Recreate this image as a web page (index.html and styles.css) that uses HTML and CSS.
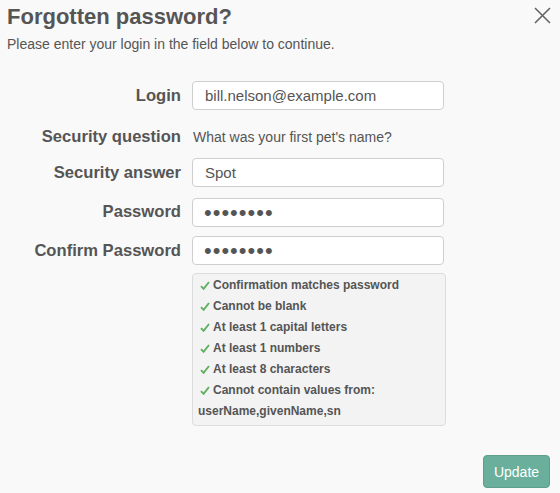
FILE: index.html
```html
<!DOCTYPE html>
<html lang="en">
<head>
<meta charset="utf-8">
<title>Forgotten password?</title>
<link rel="stylesheet" href="styles.css">
</head>
<body>
<div class="dialog">
  <div class="header">
    <div class="heading">
      <h1 class="title">Forgotten password?</h1>
      <p class="subtitle">Please enter your login in the field below to continue.</p>
    </div>
    <button class="close" type="button" aria-label="Close">
      <svg width="17" height="17" viewBox="0 0 17 17"><path d="M1 1 L16 16 M16 1 L1 16" stroke="#666" stroke-width="1.6" fill="none"/></svg>
    </button>
  </div>

  <form class="form">
    <label class="label" for="login">Login</label>
    <input class="field" id="login" type="text" value="bill.nelson@example.com">

    <span class="label q">Security question</span>
    <span class="question q">What was your first pet's name?</span>

    <label class="label" for="answer">Security answer</label>
    <input class="field" id="answer" type="text" value="Spot">

    <label class="label" for="pw">Password</label>
    <input class="field pw" id="pw" type="password" value="abcdefgh">

    <label class="label" for="pw2">Confirm Password</label>
    <input class="field pw" id="pw2" type="password" value="abcdefgh">

    <span></span>
    <div class="rules">
      <div class="rule"><svg class="tick" viewBox="0 0 10 9"><path d="M1 5.2 L3.6 7.8 L9 1" stroke="#5fae5f" stroke-width="1.9" fill="none"/></svg>Confirmation matches password</div>
      <div class="rule"><svg class="tick" viewBox="0 0 10 9"><path d="M1 5.2 L3.6 7.8 L9 1" stroke="#5fae5f" stroke-width="1.9" fill="none"/></svg>Cannot be blank</div>
      <div class="rule"><svg class="tick" viewBox="0 0 10 9"><path d="M1 5.2 L3.6 7.8 L9 1" stroke="#5fae5f" stroke-width="1.9" fill="none"/></svg>At least 1 capital letters</div>
      <div class="rule"><svg class="tick" viewBox="0 0 10 9"><path d="M1 5.2 L3.6 7.8 L9 1" stroke="#5fae5f" stroke-width="1.9" fill="none"/></svg>At least 1 numbers</div>
      <div class="rule"><svg class="tick" viewBox="0 0 10 9"><path d="M1 5.2 L3.6 7.8 L9 1" stroke="#5fae5f" stroke-width="1.9" fill="none"/></svg>At least 8 characters</div>
      <div class="rule"><svg class="tick" viewBox="0 0 10 9"><path d="M1 5.2 L3.6 7.8 L9 1" stroke="#5fae5f" stroke-width="1.9" fill="none"/></svg>Cannot contain values from: userName,givenName,sn</div>
    </div>
  </form>

  <div class="footer">
    <button class="update" type="button">Update</button>
  </div>
</div>
</body>
</html>
```

FILE: styles.css
```css
html, body {
  margin: 0;
  padding: 0;
  background: #f9f9f9;
}
body {
  font-family: "Liberation Sans", Arial, sans-serif;
  color: #555;
}
.dialog {
  width: 560px;
  height: 493px;
  box-sizing: border-box;
  padding: 4px 9px 0 7px;
}
.header {
  display: flex;
  justify-content: space-between;
  align-items: flex-start;
}
.title {
  margin: 0;
  font-size: 22px;
  line-height: 26px;
  font-weight: bold;
  color: #555;
}
.subtitle {
  margin: 6px 0 0;
  font-size: 14px;
  line-height: 17px;
  color: #555;
}
.close {
  margin: 3px 0 0;
  padding: 0;
  border: 0;
  background: none;
  width: 17px;
  height: 17px;
  display: block;
}
.close svg { display: block; }

.form {
  margin-top: 28px;
  display: grid;
  grid-template-columns: 174px 252px;
  grid-template-rows: 29px 30px 29px 31px 29px auto;
  column-gap: 11px;
  row-gap: 9px;
}
.label {
  justify-self: end;
  align-self: center;
  font-size: 16.6px;
  font-weight: bold;
  color: #555;
  line-height: 20px;
}
.q { padding-top: 6px; }
.question {
  align-self: center;
  font-size: 14px;
  line-height: 17px;
  color: #555;
  padding-left: 1px;
}
.field {
  align-self: end;
  box-sizing: border-box;
  width: 252px;
  height: 29px;
  margin: 0;
  padding: 0 12px;
  border: 1px solid #cfcfcf;
  border-radius: 4px;
  background: #fff;
  font-family: "Liberation Sans", Arial, sans-serif;
  font-size: 15px;
  color: #555;
  outline: none;
}
.field.pw {
  font-size: 22px;
  letter-spacing: 1px;
  color: #555;
  padding-left: 11px;
}
.rules {
  box-sizing: border-box;
  width: 254px;
  margin-top: -1px;
  padding: 1px 6px 3px 5px;
  border: 1px solid #dcdcdc;
  border-radius: 4px;
  background: #f3f3f3;
  font-size: 12px;
  font-weight: bold;
  line-height: 21px;
  color: #555;
}
.tick {
  display: inline-block;
  width: 10px;
  height: 9px;
  margin: 0 3px 0 2px;
  vertical-align: -1px;
}
.footer {
  display: flex;
  justify-content: flex-end;
  margin-top: 29px;
  padding-right: 1px;
}
.update {
  width: 67px;
  height: 33px;
  margin: 0;
  padding: 0;
  border: 1px solid #5d9f8c;
  border-radius: 4px;
  background: #6aaf9b;
  color: #fff;
  font-family: "Liberation Sans", Arial, sans-serif;
  font-size: 14px;
}
```
